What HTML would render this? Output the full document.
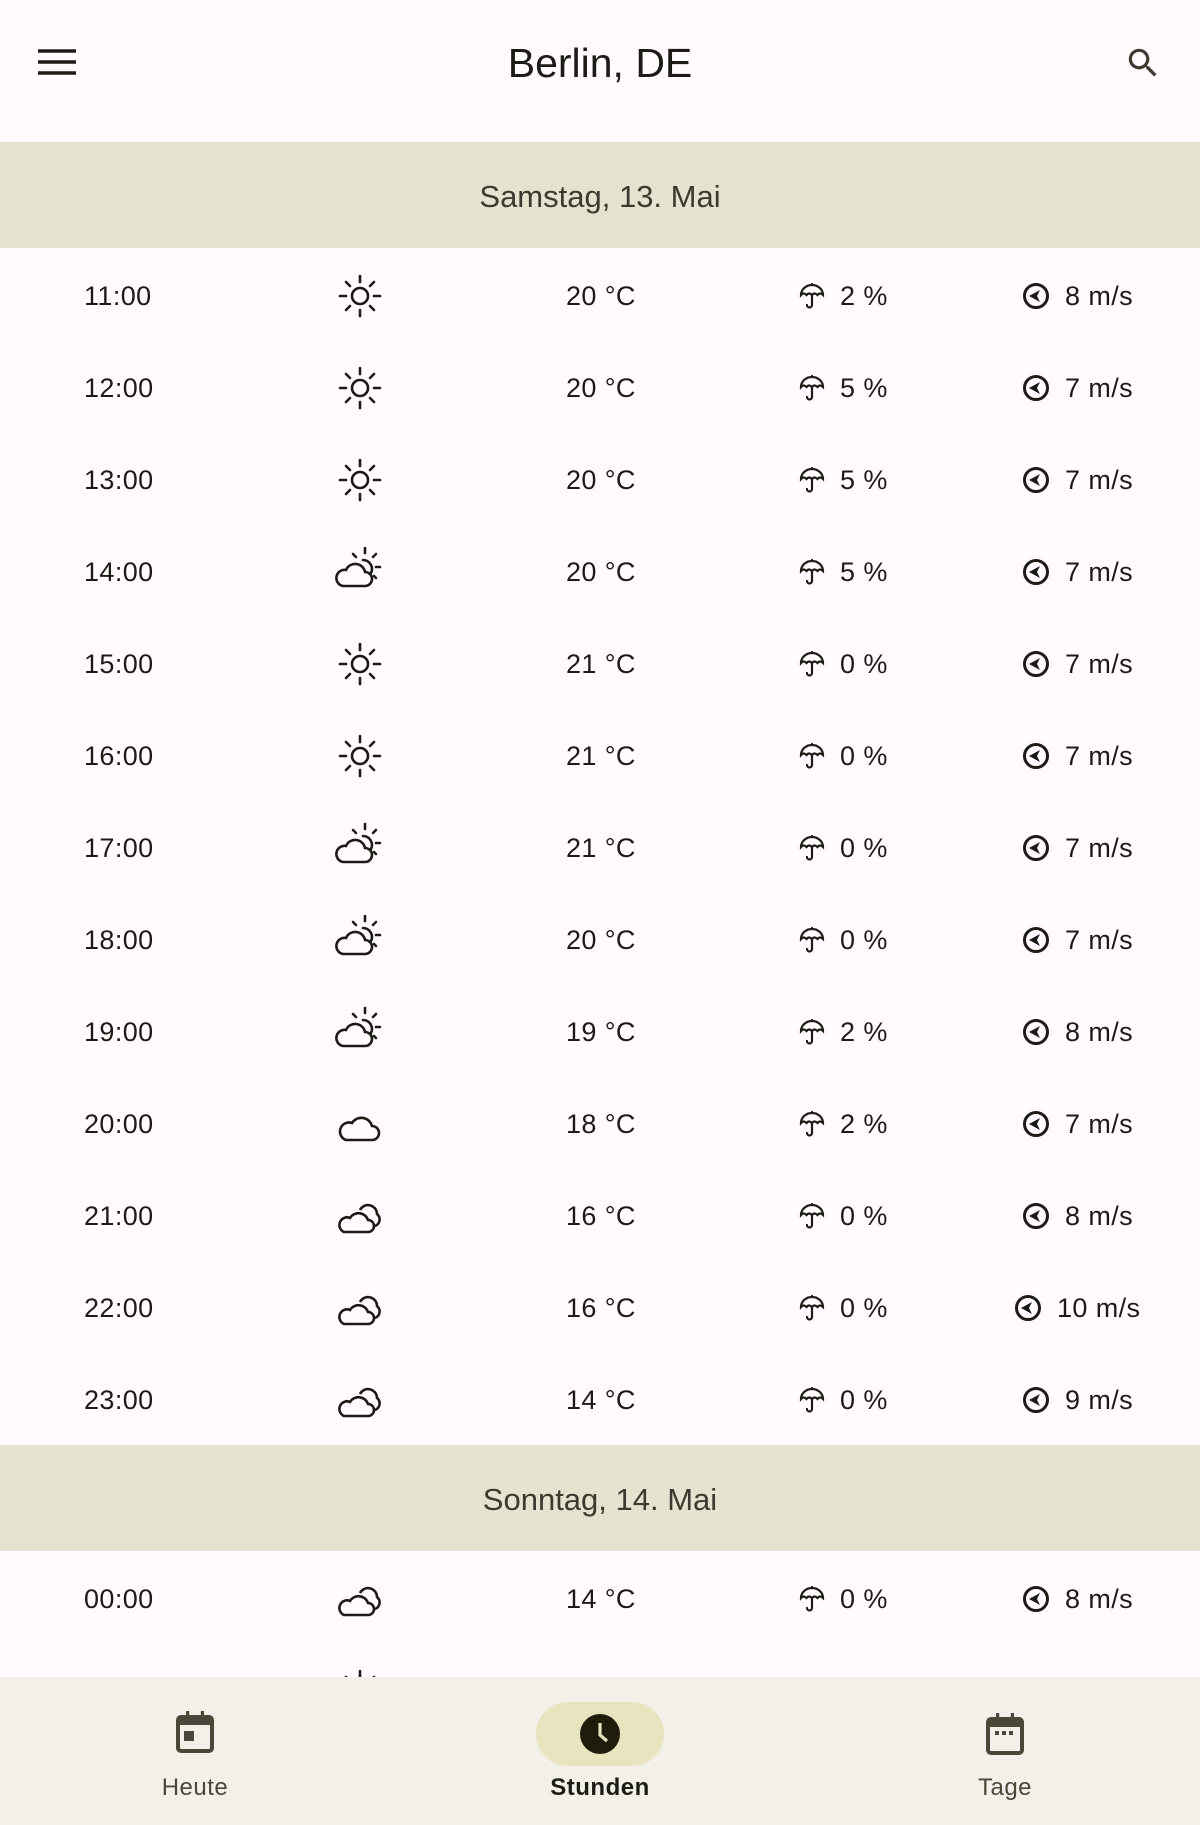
<!DOCTYPE html>
<html><head><meta charset="utf-8">
<style>
*{margin:0;padding:0;box-sizing:border-box}
body{width:1200px;height:1825px;overflow:hidden;background:#fffbfe;font-family:"Liberation Sans",sans-serif;color:#1d1b16;position:relative}
.top{position:absolute;left:0;top:0;width:1200px;height:142px;background:#fffbfe}
.title{position:absolute;left:0;width:1200px;top:38px;text-align:center;font-size:41px;line-height:50px}
.band{position:absolute;left:0;width:1200px;height:106px;background:#e5e3cf;text-align:center;line-height:110px;font-size:31px;color:#3b3a2e}
.row{position:absolute;left:0;width:1200px;height:92px;font-size:27px;letter-spacing:.4px}
.row span,.row svg{position:absolute}
.t{left:84px;top:31px}
.tp{left:566px;top:31px}
.lab{position:absolute;top:1774px;font-size:24px;width:200px;text-align:center;color:#4a4739;letter-spacing:.5px}
.nav{position:absolute;left:0;top:1677px;width:1200px;height:148px;background:#f2f0e8}
</style></head><body>
<svg width="0" height="0" style="position:absolute">
<defs>
<g id="sun" fill="none" stroke="#1d1b16" stroke-width="2.6" stroke-linecap="round">
<circle cx="22" cy="22" r="8"/>
<path d="M22 2v6M22 36v6M2 22h6M36 22h6M8 8l4 4M32 32l4 4M8 36l4-4M32 12l4-4"/>
</g>
<g id="cs" fill="none" stroke="#1d1b16" stroke-width="2.6" stroke-linecap="round">
<path d="M30 14a9 9 0 0 1 8 13"/>
<path d="M32 2v5M43 8l-3 3M47 21h-4M43 32l-2-2M20 8l3 3"/>
<path d="M10 40h22a7 7 0 0 0 0-14a10 10 0 0 0-19-2a8 8 0 0 0-3 16z"/>
</g>
<g id="cl" fill="none" stroke="#1d1b16" stroke-width="2.6">
<path d="M10 36h26a7 7 0 0 0 0-14a11 11 0 0 0-20-3a9 9 0 0 0-6 17z"/>
</g>
<g id="c2" fill="none" stroke="#1d1b16" stroke-width="2.6">
<path d="M24 16a9 9 0 0 1 17 4a7 7 0 0 1-2 12"/>
<path d="M8 38h24a6 6 0 0 0 0-12a10 10 0 0 0-18-2a7 7 0 0 0-6 14z"/>
</g>
<g id="um" fill="none" stroke="#1d1b16" stroke-width="2.2" stroke-linecap="round">
<path d="M3 13a11 10 0 0 1 22 0q-3-3-5.5 0q-3-3-5.5 0q-3-3-5.5 0q-3-3-5.5 0z"/>
<path d="M14 3v-1M14 13v10a2.5 2.5 0 0 1-5 0"/>
</g>
<g id="wi">
<circle cx="14" cy="14" r="11.5" fill="none" stroke="#1d1b16" stroke-width="3"/>
<path d="M7 14l11-6l-3 6l3 6z" fill="#1d1b16"/>
</g>
</defs></svg>

<div class="top">
<svg style="position:absolute;left:38px;top:49px" width="38" height="26"><path d="M0 2h38M0 13h38M0 24h38" stroke="#1d1b16" stroke-width="3.5"/></svg>
<div class="title">Berlin, DE</div>
<svg style="position:absolute;left:1124px;top:44px" width="38" height="38" viewBox="0 0 24 24"><path fill="#3d3b2f" d="M15.5 14h-.79l-.28-.27A6.470 6.470 0 0 0 16 9.5 6.5 6.5 0 1 0 9.5 16c1.61 0 3.09-.59 4.23-1.57l.27.28v.79l5 4.99L20.490 19l-4.990-5zm-6 0C7.010 14 5 11.990 5 9.5S7.010 5 9.5 5 14 7.010 14 9.5 11.990 14 9.5 14z"/></svg>
</div>

<div class="band" style="top:142px">Samstag, 13. Mai</div>

<div class="row" style="top:250px"><span class="t">11:00</span><svg style="left:338px;top:24px" width="46" height="46"><use href="#sun"/></svg><span class="tp">20 °C</span><svg style="left:798px;top:32px" width="28" height="28"><use href="#um"/></svg><span style="left:840px;top:31px">2 %</span><svg style="left:1022px;top:32px" width="28" height="28"><use href="#wi"/></svg><span style="left:1065px;top:31px">8 m/s</span></div>
<div class="row" style="top:342px"><span class="t">12:00</span><svg style="left:338px;top:24px" width="46" height="46"><use href="#sun"/></svg><span class="tp">20 °C</span><svg style="left:798px;top:32px" width="28" height="28"><use href="#um"/></svg><span style="left:840px;top:31px">5 %</span><svg style="left:1022px;top:32px" width="28" height="28"><use href="#wi"/></svg><span style="left:1065px;top:31px">7 m/s</span></div>
<div class="row" style="top:434px"><span class="t">13:00</span><svg style="left:338px;top:24px" width="46" height="46"><use href="#sun"/></svg><span class="tp">20 °C</span><svg style="left:798px;top:32px" width="28" height="28"><use href="#um"/></svg><span style="left:840px;top:31px">5 %</span><svg style="left:1022px;top:32px" width="28" height="28"><use href="#wi"/></svg><span style="left:1065px;top:31px">7 m/s</span></div>
<div class="row" style="top:526px"><span class="t">14:00</span><svg style="left:333px;top:20px" width="50" height="46"><use href="#cs"/></svg><span class="tp">20 °C</span><svg style="left:798px;top:32px" width="28" height="28"><use href="#um"/></svg><span style="left:840px;top:31px">5 %</span><svg style="left:1022px;top:32px" width="28" height="28"><use href="#wi"/></svg><span style="left:1065px;top:31px">7 m/s</span></div>
<div class="row" style="top:618px"><span class="t">15:00</span><svg style="left:338px;top:24px" width="46" height="46"><use href="#sun"/></svg><span class="tp">21 °C</span><svg style="left:798px;top:32px" width="28" height="28"><use href="#um"/></svg><span style="left:840px;top:31px">0 %</span><svg style="left:1022px;top:32px" width="28" height="28"><use href="#wi"/></svg><span style="left:1065px;top:31px">7 m/s</span></div>
<div class="row" style="top:710px"><span class="t">16:00</span><svg style="left:338px;top:24px" width="46" height="46"><use href="#sun"/></svg><span class="tp">21 °C</span><svg style="left:798px;top:32px" width="28" height="28"><use href="#um"/></svg><span style="left:840px;top:31px">0 %</span><svg style="left:1022px;top:32px" width="28" height="28"><use href="#wi"/></svg><span style="left:1065px;top:31px">7 m/s</span></div>
<div class="row" style="top:802px"><span class="t">17:00</span><svg style="left:333px;top:20px" width="50" height="46"><use href="#cs"/></svg><span class="tp">21 °C</span><svg style="left:798px;top:32px" width="28" height="28"><use href="#um"/></svg><span style="left:840px;top:31px">0 %</span><svg style="left:1022px;top:32px" width="28" height="28"><use href="#wi"/></svg><span style="left:1065px;top:31px">7 m/s</span></div>
<div class="row" style="top:894px"><span class="t">18:00</span><svg style="left:333px;top:20px" width="50" height="46"><use href="#cs"/></svg><span class="tp">20 °C</span><svg style="left:798px;top:32px" width="28" height="28"><use href="#um"/></svg><span style="left:840px;top:31px">0 %</span><svg style="left:1022px;top:32px" width="28" height="28"><use href="#wi"/></svg><span style="left:1065px;top:31px">7 m/s</span></div>
<div class="row" style="top:986px"><span class="t">19:00</span><svg style="left:333px;top:20px" width="50" height="46"><use href="#cs"/></svg><span class="tp">19 °C</span><svg style="left:798px;top:32px" width="28" height="28"><use href="#um"/></svg><span style="left:840px;top:31px">2 %</span><svg style="left:1022px;top:32px" width="28" height="28"><use href="#wi"/></svg><span style="left:1065px;top:31px">8 m/s</span></div>
<div class="row" style="top:1078px"><span class="t">20:00</span><svg style="left:336px;top:26px" width="50" height="40"><use href="#cl"/></svg><span class="tp">18 °C</span><svg style="left:798px;top:32px" width="28" height="28"><use href="#um"/></svg><span style="left:840px;top:31px">2 %</span><svg style="left:1022px;top:32px" width="28" height="28"><use href="#wi"/></svg><span style="left:1065px;top:31px">7 m/s</span></div>
<div class="row" style="top:1170px"><span class="t">21:00</span><svg style="left:336px;top:24px" width="50" height="44"><use href="#c2"/></svg><span class="tp">16 °C</span><svg style="left:798px;top:32px" width="28" height="28"><use href="#um"/></svg><span style="left:840px;top:31px">0 %</span><svg style="left:1022px;top:32px" width="28" height="28"><use href="#wi"/></svg><span style="left:1065px;top:31px">8 m/s</span></div>
<div class="row" style="top:1262px"><span class="t">22:00</span><svg style="left:336px;top:24px" width="50" height="44"><use href="#c2"/></svg><span class="tp">16 °C</span><svg style="left:798px;top:32px" width="28" height="28"><use href="#um"/></svg><span style="left:840px;top:31px">0 %</span><svg style="left:1014px;top:32px" width="28" height="28"><use href="#wi"/></svg><span style="left:1057px;top:31px">10 m/s</span></div>
<div class="row" style="top:1354px"><span class="t">23:00</span><svg style="left:336px;top:24px" width="50" height="44"><use href="#c2"/></svg><span class="tp">14 °C</span><svg style="left:798px;top:32px" width="28" height="28"><use href="#um"/></svg><span style="left:840px;top:31px">0 %</span><svg style="left:1022px;top:32px" width="28" height="28"><use href="#wi"/></svg><span style="left:1065px;top:31px">9 m/s</span></div>

<div class="band" style="top:1445px">Sonntag, 14. Mai</div>

<div class="row" style="top:1553px"><span class="t">00:00</span><svg style="left:336px;top:24px" width="50" height="44"><use href="#c2"/></svg><span class="tp">14 °C</span><svg style="left:798px;top:32px" width="28" height="28"><use href="#um"/></svg><span style="left:840px;top:31px">0 %</span><svg style="left:1022px;top:32px" width="28" height="28"><use href="#wi"/></svg><span style="left:1065px;top:31px">8 m/s</span></div>
<div class="row" style="top:1645px"><svg style="left:338px;top:24px" width="46" height="46"><use href="#sun"/></svg><svg style="left:1022px;top:32px" width="28" height="28"><use href="#wi"/></svg></div>

<div class="nav">
<svg style="position:absolute;left:176px;top:34px" width="38" height="42" viewBox="0 0 19 21"><path fill="#4a4739" d="M5 0h1.6v2h5.8V0H14v2h2.5A2.5 2.5 0 0 1 19 4.5v14A2.5 2.5 0 0 1 16.5 21h-14A2.5 2.5 0 0 1 0 18.5v-14A2.5 2.5 0 0 1 2.5 2H5zM2 7v11.5q0 .5.5.5h14q.5 0 .5-.5V7zm2 3h5v5H4z"/></svg>
<div style="position:absolute;left:536px;top:25px;width:128px;height:64px;border-radius:32px;background:#e8e4bf"></div>
<svg style="position:absolute;left:580px;top:37px" width="40" height="40" viewBox="0 0 20 20"><circle cx="10" cy="10" r="10" fill="#1f1c0b"/><path d="M10 4.5v6l3.5 3" stroke="#e8e4bf" stroke-width="1.6" fill="none"/></svg>
<svg style="position:absolute;left:986px;top:36px" width="38" height="42" viewBox="0 0 19 21"><path fill="#4a4739" d="M5 0h1.6v2h5.8V0H14v2h2.5A2.5 2.5 0 0 1 19 4.5v14A2.5 2.5 0 0 1 16.5 21h-14A2.5 2.5 0 0 1 0 18.5v-14A2.5 2.5 0 0 1 2.5 2H5zM2 7v11.5q0 .5.5.5h14q.5 0 .5-.5V7zm2.5 2h2v2h-2zm3.5 0h2v2H8zm3.5 0h2v2h-2z"/></svg>
</div>
<div class="lab" style="left:95px">Heute</div>
<div class="lab" style="left:500px;color:#1d1b16;font-weight:bold">Stunden</div>
<div class="lab" style="left:905px">Tage</div>
</body></html>
